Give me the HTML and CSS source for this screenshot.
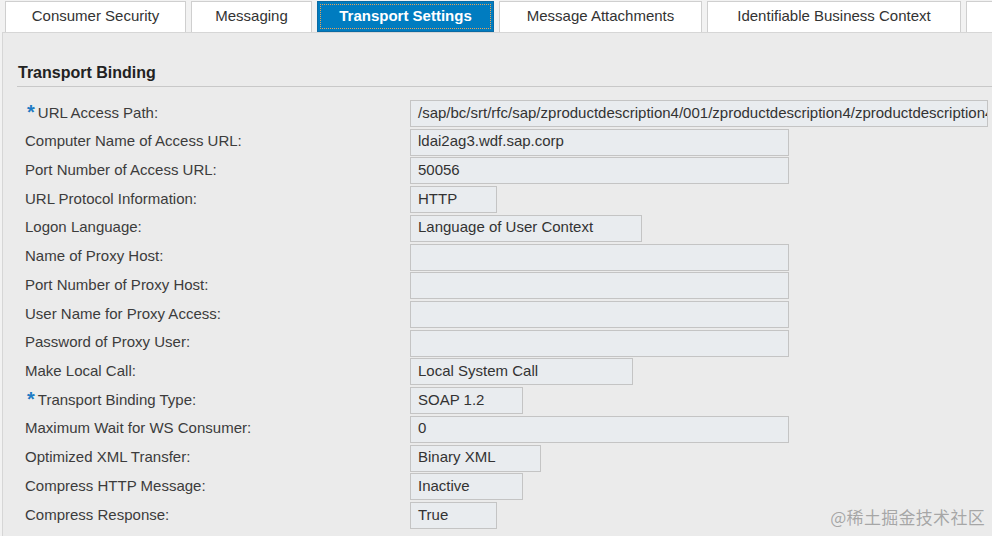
FILE: index.html
```html
<!DOCTYPE html>
<html>
<head>
<meta charset="utf-8">
<link rel="stylesheet" href="styles.css">
</head>
<body>
<div class="tabs">
  <div class="tab t1">Consumer Security</div>
  <div class="tab t2">Messaging</div>
  <div class="tab t3 active"><span>Transport Settings</span></div>
  <div class="tab t4">Message Attachments</div>
  <div class="tab t5">Identifiable Business Context</div>
  <div class="tab t6"></div>
</div>
<div class="panel">
  <div class="heading">Transport Binding</div>
  <div class="form">
    <div class="label"><span class="req">*</span>URL Access Path:</div>
    <div class="field full overflow">/sap/bc/srt/rfc/sap/zproductdescription4/001/zproductdescription4/zproductdescription4</div>
    <div class="label">Computer Name of Access URL:</div>
    <div class="field wide">ldai2ag3.wdf.sap.corp</div>
    <div class="label">Port Number of Access URL:</div>
    <div class="field wide">50056</div>
    <div class="label">URL Protocol Information:</div>
    <div class="field w86">HTTP</div>
    <div class="label">Logon Language:</div>
    <div class="field w232">Language of User Context</div>
    <div class="label">Name of Proxy Host:</div>
    <div class="field wide"></div>
    <div class="label">Port Number of Proxy Host:</div>
    <div class="field wide"></div>
    <div class="label">User Name for Proxy Access:</div>
    <div class="field wide"></div>
    <div class="label">Password of Proxy User:</div>
    <div class="field wide"></div>
    <div class="label">Make Local Call:</div>
    <div class="field w223">Local System Call</div>
    <div class="label"><span class="req">*</span>Transport Binding Type:</div>
    <div class="field w113">SOAP 1.2</div>
    <div class="label">Maximum Wait for WS Consumer:</div>
    <div class="field wide">0</div>
    <div class="label">Optimized XML Transfer:</div>
    <div class="field w131">Binary XML</div>
    <div class="label">Compress HTTP Message:</div>
    <div class="field w113">Inactive</div>
    <div class="label">Compress Response:</div>
    <div class="field w86">True</div>
  </div>
</div>
<div class="watermark">@稀土掘金技术社区</div>
</body>
</html>
```
FILE: styles.css
```css
html, body {
  margin: 0;
  padding: 0;
}
body {
  width: 992px;
  height: 536px;
  overflow: hidden;
  background: #f2f2f2;
  font-family: "Liberation Sans", Arial, sans-serif;
  font-size: 15px;
  color: #333;
  position: relative;
}
.tabs {
  display: flex;
  gap: 5px;
  padding: 1px 0 0 5px;
  height: 31px;
  white-space: nowrap;
}
.tab {
  box-sizing: border-box;
  height: 31px;
  flex: none;
  background: #fff;
  border: 1px solid #cfcfcf;
  border-bottom: none;
  display: flex;
  align-items: center;
  justify-content: center;
  color: #333;
  padding-bottom: 3px;
}
.t1 { width: 181px; }
.t2 { width: 121px; }
.t3 { width: 177px; }
.t4 { width: 203px; }
.t5 { width: 254px; }
.t6 { width: 60px; }
.tab.active {
  background: #007cc0;
  border: 1px solid #0a6aa3;
  color: #fff;
  font-weight: bold;
  padding: 2px;
}
.tab.active span {
  box-sizing: border-box;
  width: 100%;
  height: 100%;
  display: flex;
  align-items: center;
  justify-content: center;
  border: 1px dotted #e8a45a;
  padding-bottom: 2px;
}
.panel {
  margin-left: 2px;
  background: #ebebeb;
  border-top: 1px solid #d6d6d6;
  border-left: 1px solid #d6d6d6;
  height: 503px;
  padding: 0 0 0 14px;
}
.heading {
  font-weight: bold;
  font-size: 16px;
  color: #222;
  padding: 31px 0 0 1px;
  height: 22px;
  border-bottom: 1px solid #c8c8c8;
}
.form {
  display: grid;
  grid-template-columns: 385px 1fr;
  grid-auto-rows: 28.72px;
  padding: 13px 0 0 8px;
}
.label {
  box-sizing: border-box;
  display: flex;
  align-items: center;
  padding-bottom: 3px;
  height: 27px;
  color: #3c3c3c;
}
.req {
  color: #1d7bc4;
  font-weight: bold;
  font-size: 20px;
  margin: 0 3px 0 2px;
}
.field {
  box-sizing: border-box;
  height: 27px;
  background: #e9ecef;
  border: 1px solid #c4c4c4;
  padding: 0 7px 3px;
  display: flex;
  align-items: center;
  white-space: nowrap;
  overflow: hidden;
  color: #333;
  justify-self: start;
}
.full { width: 578px; }
.wide { width: 379px; }
.w86 { width: 87px; }
.w113 { width: 113px; }
.w131 { width: 131px; }
.w223 { width: 223px; }
.w232 { width: 232px; }
.watermark {
  position: absolute;
  right: 7px;
  bottom: 7px;
  font-family: "Noto Sans CJK SC", sans-serif;
  font-size: 17px;
  color: rgba(120, 120, 120, 0.6);
  letter-spacing: 0.3px;
}
```
